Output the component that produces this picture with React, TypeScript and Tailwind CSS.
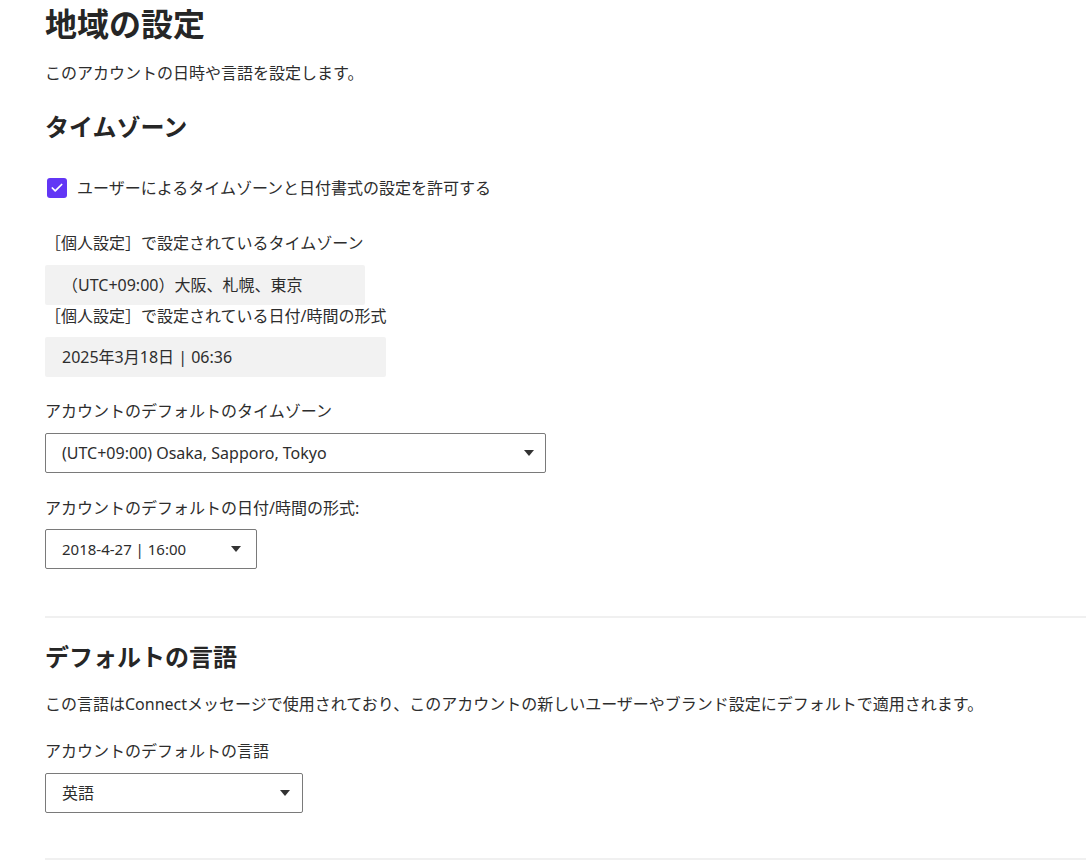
import { Check } from "lucide-react"

const font = "font-['Noto_Sans','Noto_Sans_CJK_JP',sans-serif]"

function Caret() {
  return (
    <svg width="10" height="6" viewBox="0 0 10 6" className="shrink-0">
      <path d="M0 0h10L5 6z" fill="#333" />
    </svg>
  )
}

function SelectBox({ value, className }: { value: string; className: string }) {
  return (
    <div
      className={`${className} h-10 border border-[#7a7a7a] rounded-[2px] flex items-center justify-between pl-4 text-[#2d2d2d]`}
    >
      <span>{value}</span>
      <Caret />
    </div>
  )
}

function Label({ children, className = "" }: { children: React.ReactNode; className?: string }) {
  return <p className={`text-[16px] leading-6 text-[#2d2d2d] ${className}`}>{children}</p>
}

export default function App() {
  return (
    <div className={`${font} bg-white min-h-[861px] pl-[45px] pt-1 text-[#2d2d2d]`}>
      <h1 className="text-[32px] leading-10 font-bold text-[#262626]">地域の設定</h1>
      <p className="mt-[17px] text-[16px] leading-6">このアカウントの日時や言語を設定します。</p>

      <h2 className="mt-[26px] text-[24px] leading-8 font-bold text-[#262626]">タイムゾーン</h2>

      <label className="mt-[33px] flex items-center gap-[10px] h-6 pl-[2px]">
        <span className="w-5 h-5 rounded-[3px] bg-[#6236f5] flex items-center justify-center">
          <Check className="w-[14px] h-[14px] text-white" strokeWidth={3} />
        </span>
        <span className="text-[16px] leading-6">ユーザーによるタイムゾーンと日付書式の設定を許可する</span>
      </label>

      <Label className="mt-[31px]">［個人設定］で設定されているタイムゾーン</Label>
      <div className="mt-[10px] w-[320px] h-10 bg-[#f2f2f2] rounded-[2px] flex items-center pl-[17px] text-[16px]">
        （UTC+09:00）大阪、札幌、東京
      </div>
      <p className="text-[16px] leading-[22px]">［個人設定］で設定されている日付/時間の形式</p>
      <div className="mt-[10px] w-[341px] h-10 bg-[#f2f2f2] rounded-[2px] flex items-center pl-[17px] text-[16px]">
        2025年3月18日 | 06:36
      </div>

      <Label className="mt-[22px]">アカウントのデフォルトのタイムゾーン</Label>
      <div className="mt-[10px]">
        <SelectBox value="(UTC+09:00) Osaka, Sapporo, Tokyo" className="w-[501px] pr-[11px] text-[16px]" />
      </div>

      <Label className="mt-[23px]">アカウントのデフォルトの日付/時間の形式:</Label>
      <div className="mt-[9px]">
        <SelectBox value="2018-4-27 | 16:00" className="w-[212px] pr-[15px] text-[15px]" />
      </div>

      <div className="mt-[47px] h-[2px] bg-[#f0f0f0]" />

      <h2 className="mt-[23px] text-[24px] leading-8 font-bold text-[#262626]">デフォルトの言語</h2>
      <p className="mt-[19px] text-[16px] leading-6">
        この言語はConnectメッセージで使用されており、このアカウントの新しいユーザーやブランド設定にデフォルトで適用されます。
      </p>

      <Label className="mt-[23px]">アカウントのデフォルトの言語</Label>
      <div className="mt-[10px]">
        <SelectBox value="英語" className="w-[258px] pr-[12px] text-[16px]" />
      </div>

      <div className="mt-[45px] h-[2px] bg-[#f0f0f0]" />
    </div>
  )
}
